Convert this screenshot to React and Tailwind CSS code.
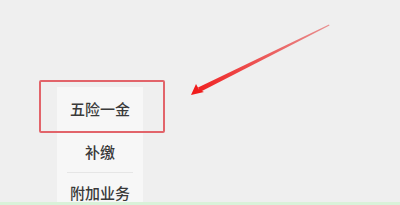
import React from 'react'

const items = ['五险一金', '补缴', '附加业务']

export default function App() {
  return (
    <div
      className="relative w-[400px] h-[205px] overflow-hidden bg-[#efefef]"
      style={{ fontFamily: '"Noto Sans CJK SC", "Noto Sans", sans-serif' }}
    >
      {/* menu panel */}
      <div className="ml-[57px] pt-[87px] w-[86px]">
        <div className="flex flex-col bg-[#f7f7f7]">
          <div className="h-[45px] flex items-center justify-center text-[15px] font-medium text-[#3a3a3a]">{items[0]}</div>
          <div className="h-[40px] flex items-center justify-center text-[15px] font-medium text-[#3a3a3a]">{items[1]}</div>
          <div className="mx-[10px] h-px bg-[#e6e6e6]" />
          <div className="h-[40px] flex items-center justify-center text-[15px] font-medium text-[#3a3a3a]">{items[2]}</div>
        </div>
      </div>

      {/* highlight box */}
      <div className="absolute left-[39px] top-[80px] w-[126px] h-[53px] border-2 border-[#e2646a] rounded-[2px]" />

      {/* arrow */}
      <svg className="absolute left-0 top-0" width="400" height="205" viewBox="0 0 400 205">
        <defs>
          <linearGradient id="ar" x1="329" y1="25" x2="191" y2="95" gradientUnits="userSpaceOnUse">
            <stop offset="0" stopColor="#e89090" />
            <stop offset="1" stopColor="#f01c1c" />
          </linearGradient>
        </defs>
        <polygon points="329,24.5 329.5,25.5 200,92 198,87.5" fill="url(#ar)" />
        <polygon points="191,95 196,84 199,89.5 204,92 " fill="#f01c1c" />
      </svg>

      {/* bottom strip */}
      <div className="absolute left-0 bottom-0 w-full h-[3px] bg-[#d9f2d9]" />
    </div>
  )
}
